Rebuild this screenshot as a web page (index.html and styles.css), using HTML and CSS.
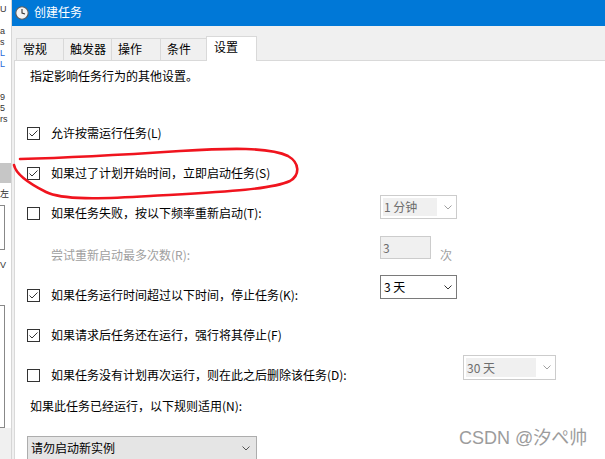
FILE: index.html
```html
<!DOCTYPE html>
<html lang="zh-CN">

<head>
    <meta charset="UTF-8" />
    <meta name="viewport" content="width=device-width, initial-scale=1.0" />
    <title>创建任务</title>
    <link rel="stylesheet" href="styles.css">
</head>

<body>
    <div id="screen">
        <!-- 背后的窗口 -->
        <div class="bg-window">
            <div class="bg-lines">U<br><br>a<br>s<br><span class="blue">L</span><br><span class="blue">L</span><br><br><br>9<br>5<br>rs</div>
            <div class="bg-bar"></div>
            <div class="bg-gap">左</div>
            <div class="bg-box"></div>
            <div class="bg-gap bg-v">V</div>
            <div class="bg-box bg-box-tall"></div>
            <div class="bg-rest"></div>
        </div>

        <div class="dialog">
            <div class="title-bar">
                <svg class="title-icon" viewBox="0 0 14 14">
                    <circle cx="7" cy="7" r="6.2" fill="#f4f4f4" stroke="#5a5a5a" stroke-width="1.1" />
                    <polyline points="7,3 7,7 10,8" fill="none" stroke="#333" stroke-width="1.1" />
                </svg>
                <span class="title-text">创建任务</span>
            </div>

            <div class="dialog-body">
                <div class="tabs">
                    <div class="tab tab-general">常规</div>
                    <div class="tab tab-triggers">触发器</div>
                    <div class="tab tab-actions">操作</div>
                    <div class="tab tab-conditions">条件</div>
                    <div class="tab tab-active">设置</div>
                </div>

                <div class="tab-panel">
                    <p class="intro">指定影响任务行为的其他设置。</p>

                    <div class="options">
                        <div class="row">
                            <span class="check on"><svg viewBox="0 0 11 11"><polyline points="1.5,5.5 4,8 9.5,2.5" /></svg></span>
                            <span class="label">允许按需运行任务(L)</span>
                        </div>
                        <div class="row">
                            <span class="check on"><svg viewBox="0 0 11 11"><polyline points="1.5,5.5 4,8 9.5,2.5" /></svg></span>
                            <span class="label">如果过了计划开始时间，立即启动任务(S)</span>
                        </div>
                        <div class="row">
                            <span class="check"></span>
                            <span class="label">如果任务失败，按以下频率重新启动(T):</span>
                            <div class="combo disabled combo-retry">
                                <span class="combo-value">1 分钟</span>
                                <svg class="chevron" viewBox="0 0 8 5"><polyline points="0.5,0.5 4,4 7.5,0.5" /></svg>
                            </div>
                        </div>
                        <div class="row row-sub">
                            <span class="label muted">尝试重新启动最多次数(R):</span>
                            <span class="spin">3</span>
                            <span class="unit muted">次</span>
                        </div>
                        <div class="row">
                            <span class="check on"><svg viewBox="0 0 11 11"><polyline points="1.5,5.5 4,8 9.5,2.5" /></svg></span>
                            <span class="label">如果任务运行时间超过以下时间，停止任务(K):</span>
                            <div class="combo combo-limit">
                                <span class="combo-value">3 天</span>
                                <svg class="chevron" viewBox="0 0 8 5"><polyline points="0.5,0.5 4,4 7.5,0.5" /></svg>
                            </div>
                        </div>
                        <div class="row">
                            <span class="check on"><svg viewBox="0 0 11 11"><polyline points="1.5,5.5 4,8 9.5,2.5" /></svg></span>
                            <span class="label">如果请求后任务还在运行，强行将其停止(F)</span>
                        </div>
                        <div class="row">
                            <span class="check"></span>
                            <span class="label label-long">如果任务没有计划再次运行，则在此之后删除该任务(D):</span>
                            <div class="combo disabled combo-delete">
                                <span class="combo-value">30 天</span>
                                <svg class="chevron" viewBox="0 0 8 5"><polyline points="0.5,0.5 4,4 7.5,0.5" /></svg>
                            </div>
                        </div>
                    </div>

                    <p class="rule-text">如果此任务已经运行，以下规则适用(N):</p>
                    <div class="combo combo-rule">
                        <span class="combo-value">请勿启动新实例</span>
                        <svg class="chevron" viewBox="0 0 8 5"><polyline points="0.5,0.5 4,4 7.5,0.5" /></svg>
                    </div>
                </div>
            </div>
        </div>
    </div>

    <!-- 红色圈 -->
    <svg class="red-mark" viewBox="0 0 605 459">
        <path d="M20 159 C60 158 120 155 180 151 C230 148 270 147 288 156 C300 163 300 175 290 181 C270 190 220 192 150 196 C100 199 62 200 46 192 C30 184 16 175 14 165" />
    </svg>

    <div class="watermark">CSDN @汐ぺ帅</div>
</body>

</html>
```

FILE: styles.css
```css
* {
    box-sizing: border-box;
}

body {
    margin: 0;
    position: relative;
    width: 605px;
    height: 459px;
    overflow: hidden;
    font-family: "Noto Sans CJK SC", "Liberation Sans", sans-serif;
    font-size: 12px;
    color: #000;
    background: #fff;
}

#screen {
    display: flex;
    height: 459px;
}

/* 背后的窗口 */
.bg-window {
    flex: none;
    width: 12px;
    display: flex;
    flex-direction: column;
    background: #fff;
    border-right: 1px solid #d6d6d6;
}

.bg-lines {
    height: 163px;
    padding-top: 4px;
    line-height: 11px;
    font-family: "Liberation Sans", sans-serif;
    font-size: 9px;
    color: #333;
}

.bg-lines .blue {
    color: #2a6ad8;
}

.bg-bar {
    height: 20px;
    background: #c6c6c6;
}

.bg-gap {
    height: 22px;
    font-size: 9px;
    line-height: 22px;
    color: #333;
}

.bg-v {
    height: 55px;
    line-height: 30px;
    font-family: "Liberation Sans", sans-serif;
}

.bg-box {
    width: 5px;
    height: 45px;
    border: 1px solid #888;
    border-left: none;
}

.bg-box-tall {
    height: 123px;
}

.bg-rest {
    flex: 1;
    background: #f0f0f0;
}

/* 对话框 */
.dialog {
    flex: 1;
    display: flex;
    flex-direction: column;
}

.title-bar {
    height: 26px;
    flex: none;
    display: flex;
    align-items: center;
    padding-left: 3px;
    background: #0078d7;
}

.title-icon {
    width: 14px;
    height: 14px;
    margin-right: 5px;
}

.title-text {
    color: #fff;
    font-size: 12px;
    line-height: 16px;
    margin-top: -2px;
}

.dialog-body {
    flex: 1;
    display: flex;
    flex-direction: column;
    padding: 10px 0 0 2px;
    background: #f0f0f0;
}

.tabs {
    display: flex;
    align-items: flex-end;
    margin-left: 2px;
    margin-bottom: -1px;
}

.tab {
    height: 22px;
    margin-bottom: 1px;
    padding: 2px 0 0 6px;
    line-height: 16px;
    border: 1px solid #d9d9d9;
    border-right: none;
    border-bottom: none;
    background: #f0f0f0;
}

.tab-general {
    width: 47px;
}

.tab-triggers {
    width: 48px;
}

.tab-actions {
    width: 49px;
}

.tab-conditions {
    width: 46px;
}

.tab-active {
    position: relative;
    z-index: 1;
    width: 51px;
    height: 25px;
    margin-bottom: 0;
    padding-left: 7px;
    border-right: 1px solid #d9d9d9;
    background: #fff;
}

.tab-panel {
    flex: 1;
    padding: 7px 0 0 12px;
    background: #fff;
    border-top: 1px solid #d9d9d9;
    border-left: 1px solid #d9d9d9;
}

.intro {
    margin: 0 0 0 3px;
    line-height: 16px;
}

.options {
    margin-top: 29px;
}

.row {
    display: flex;
    align-items: center;
    height: 40px;
}

.row-sub {
    margin-top: 2px;
    padding-left: 24px;
}

.check {
    flex: none;
    width: 13px;
    height: 13px;
    margin-right: 11px;
    border: 1px solid #333;
    background: #fff;
}

.check svg {
    display: block;
    width: 11px;
    height: 11px;
    fill: none;
    stroke: #333;
    stroke-width: 1;
}

.label {
    flex: none;
    width: 329px;
    line-height: 16px;
    white-space: nowrap;
}

.label-long {
    width: 412px;
}

.muted {
    color: #a0a0a0;
}

/* 下拉框 */
.combo {
    flex: none;
    display: flex;
    align-items: center;
    width: 77px;
    height: 24px;
    padding: 2px;
    border: 1px solid #7a7a7a;
    background: #fff;
}

.combo-value {
    width: 54px;
    height: 18px;
    line-height: 18px;
    padding-left: 1px;
    white-space: nowrap;
}

.chevron {
    width: 8px;
    height: 5px;
    margin-left: 7px;
    fill: none;
    stroke: #333;
    stroke-width: 1;
}

.combo.disabled {
    border-color: #cccccc;
    color: #6d6d6d;
}

.combo.disabled .combo-value {
    background: #f0f0f0;
}

.combo.disabled .chevron {
    stroke: #a0a0a0;
}

.combo-retry {
    margin-bottom: 12px;
}

.combo-limit {
    margin-bottom: 16px;
}

.combo-delete {
    width: 93px;
    height: 25px;
    margin-bottom: 15px;
}

.combo-delete .combo-value {
    width: 70px;
    height: 19px;
    line-height: 19px;
}

.spin {
    flex: none;
    width: 51px;
    height: 23px;
    margin-bottom: 15px;
    padding-left: 2px;
    line-height: 21px;
    border: 1px solid #cccccc;
    background: #f0f0f0;
    color: #6d6d6d;
}

.unit {
    margin-left: 9px;
    line-height: 16px;
}

.rule-text {
    margin: 3px 0 0 3px;
    line-height: 16px;
}

.combo-rule {
    width: 230px;
    margin-top: 22px;
    padding-left: 3px;
    background: #e5e5e5;
    border-color: #adadad;
}

.combo-rule .combo-value {
    width: auto;
    flex: 1;
    padding-left: 0;
}

.combo-rule .chevron {
    margin-right: 4px;
    stroke: #555;
}

/* 标注 */
.red-mark {
    position: absolute;
    left: 0;
    top: 0;
    width: 605px;
    height: 459px;
    pointer-events: none;
}

.red-mark path {
    fill: none;
    stroke: #f0141e;
    stroke-width: 2.6;
    stroke-linecap: round;
    stroke-linejoin: round;
}

.watermark {
    position: absolute;
    left: 459px;
    top: 427px;
    font-family: "Liberation Sans", "Noto Sans CJK SC", sans-serif;
    font-size: 18px;
    line-height: 22px;
    color: #9c9c9c;
    text-shadow: 0 0 2px #fff, 0 0 1px #fff;
    white-space: nowrap;
}
```
